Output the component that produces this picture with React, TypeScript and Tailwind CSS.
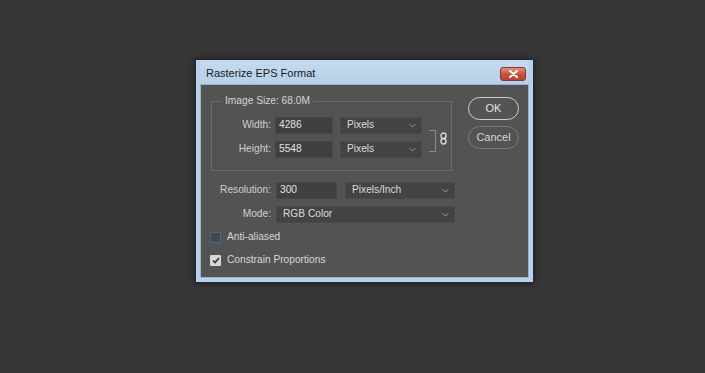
import React from "react";

const Chevron = () => (
  <svg width="7" height="5" viewBox="0 0 7 5" className="shrink-0">
    <path d="M0.5 1 L3.5 4 L6.5 1" fill="none" stroke="#9a9a9a" strokeWidth="1" />
  </svg>
);

const Select = ({ label, w }: { label: string; w: string }) => (
  <div
    className={`${w} h-[17px] bg-[#434343] border border-[#4a4a4a] flex items-center justify-between pl-[6px] pr-[5px] text-[#dcdcdc]`}
  >
    <span>{label}</span>
    <Chevron />
  </div>
);

const Input = ({ value, w }: { value: string; w: string }) => (
  <div
    className={`${w} h-[17px] bg-[#404040] border border-[#474747] flex items-center pl-[3px] text-[#e0e0e0]`}
  >
    {value}
  </div>
);

export default function App() {
  return (
    <div
      className="w-[705px] h-[373px] bg-[#363636] pt-[59px] pl-[195px] text-[10.2px] leading-none"
      style={{ fontFamily: '"Liberation Sans", Arial, sans-serif' }}
    >
      <div className="w-[339px] border border-[#1f2a33] bg-[#b9d1ea] px-[4px] pb-[4px] shadow-[0_0_6px_rgba(0,0,0,0.5)]">
        {/* Title bar */}
        <div className="h-[24px] flex items-center justify-between pt-[3px] pl-[6px] pr-[3px] bg-gradient-to-b from-[#c6dbf0] to-[#b6cfe8]">
          <span className="text-[11px] text-[#1a1a1a]">Rasterize EPS Format</span>
          <div className="w-[26px] h-[14px] rounded-[3px] border border-[#7d3a2e] bg-gradient-to-b from-[#e0907f] via-[#c9533e] to-[#b8432f] flex items-center justify-center">
            <svg width="9" height="8" viewBox="0 0 9 8">
              <path d="M1 1 L8 7 M8 1 L1 7" stroke="#ffffff" strokeWidth="2" strokeLinecap="round" />
            </svg>
          </div>
        </div>
        {/* Content */}
        <div className="h-[194px] bg-[#535353] border border-[#9ab3cc] flex pl-[10px] pt-[9px] text-[#cfcfcf]">
          <div className="flex flex-col w-[244px]">
            <fieldset className="w-[241px] border border-[#6a6a6a] pl-[10px] pb-[12px]">
              <legend className="px-[3px] leading-[14px] text-[#d4d4d4]">Image Size: 68.0M</legend>
              <div className="flex items-center mt-[9px]">
                <div className="flex flex-col gap-[7px]">
                  <div className="flex items-center">
                    <span className="w-[49px] text-right">Width:</span>
                    <div className="w-[4px]" />
                    <Input value="4286" w="w-[58px]" />
                    <div className="w-[7px]" />
                    <Select label="Pixels" w="w-[82px]" />
                  </div>
                  <div className="flex items-center">
                    <span className="w-[49px] text-right">Height:</span>
                    <div className="w-[4px]" />
                    <Input value="5548" w="w-[58px]" />
                    <div className="w-[7px]" />
                    <Select label="Pixels" w="w-[82px]" />
                  </div>
                </div>
                <div className="ml-[7px] mt-[6px] w-[7px] h-[22px] border-t border-r border-b border-[#8c8c8c]" />
                <svg width="7" height="13" viewBox="0 0 7 13" className="ml-[4px] mt-[2px]">
                  <rect x="1" y="1" width="5" height="5.5" rx="2.5" fill="none" stroke="#d8d8d8" strokeWidth="1.4" />
                  <rect x="1" y="6.5" width="5" height="5.5" rx="2.5" fill="none" stroke="#d8d8d8" strokeWidth="1.4" />
                </svg>
              </div>
            </fieldset>
            <div className="flex items-center mt-[11px]">
              <span className="w-[60px] text-right">Resolution:</span>
              <div className="w-[5px]" />
              <Input value="300" w="w-[61px]" />
              <div className="w-[8px]" />
              <Select label="Pixels/Inch" w="w-[110px]" />
            </div>
            <div className="flex items-center mt-[7px]">
              <span className="w-[60px] text-right">Mode:</span>
              <div className="w-[5px]" />
              <Select label="RGB Color" w="w-[179px]" />
            </div>
            <div className="flex items-center mt-[9px] -ml-[1px]">
              <div className="w-[11px] h-[11px] border border-[#3d6a9e] bg-[#474747] rounded-[1px]" />
              <span className="ml-[6px] text-[#d6d6d6]">Anti-aliased</span>
            </div>
            <div className="flex items-center mt-[12px] -ml-[1px]">
              <div className="w-[11px] h-[11px] bg-[#d6d6d6] rounded-[1px] flex items-center justify-center">
                <svg width="8" height="7" viewBox="0 0 8 7">
                  <path d="M1 3.5 L3 5.5 L7 1" fill="none" stroke="#2e2e2e" strokeWidth="1.6" />
                </svg>
              </div>
              <span className="ml-[6px] text-[#d6d6d6]">Constrain Proportions</span>
            </div>
          </div>
          <div className="flex flex-col ml-[13px] mt-[3px] gap-[6px]">
            <div className="w-[51px] h-[23px] rounded-full border border-[#cfcfcf] flex items-center justify-center text-[#e6e6e6] text-[11px]">
              OK
            </div>
            <div className="w-[51px] h-[23px] rounded-full border border-[#7c7c7c] flex items-center justify-center text-[#d6d6d6] text-[11px]">
              Cancel
            </div>
          </div>
        </div>
      </div>
    </div>
  );
}
